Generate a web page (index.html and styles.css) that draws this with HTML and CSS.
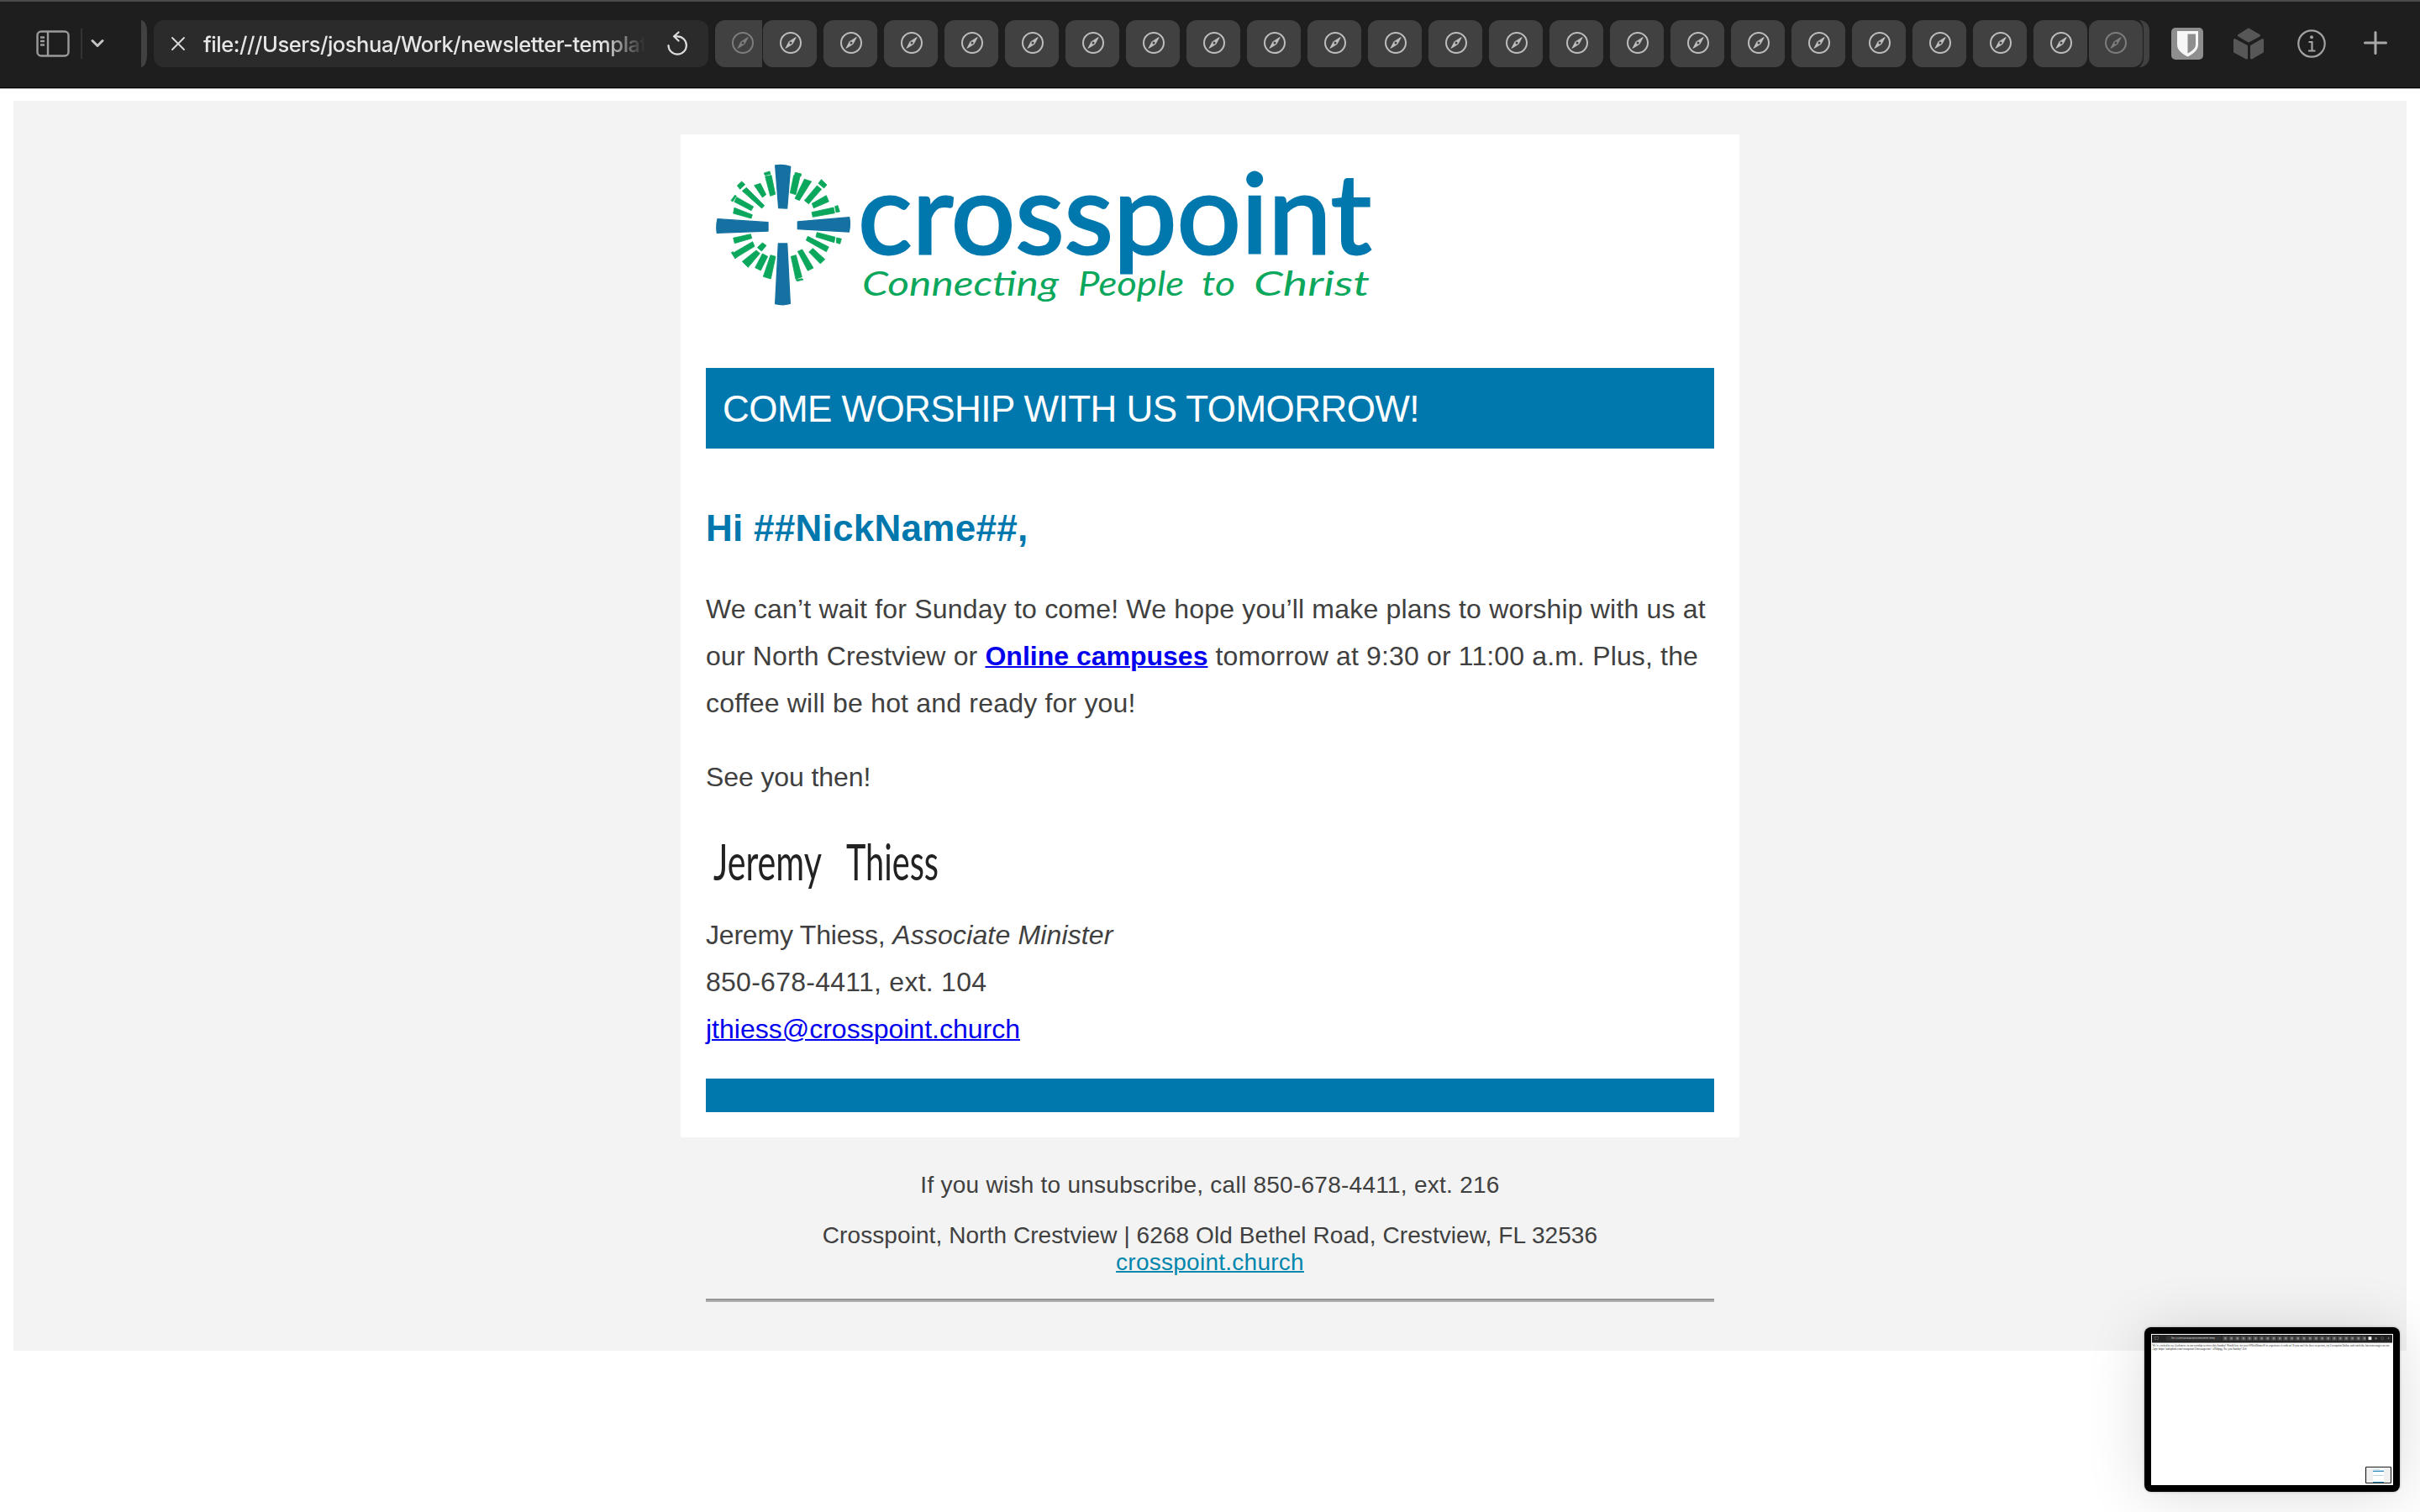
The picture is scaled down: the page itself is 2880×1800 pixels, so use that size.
FILE: index.html
```html
<!DOCTYPE html>
<html lang="en">
<head>
<meta charset="utf-8">
<title>Crosspoint newsletter</title>
<link rel="stylesheet" href="styles.css">
</head>
<body>
<svg class="defs" width="0" height="0" aria-hidden="true">
  <symbol id="compass" viewBox="0 0 26 26">
    <circle cx="13" cy="13" r="12" fill="none" stroke="currentColor" stroke-width="2"/>
    <path fill="currentColor" fill-rule="evenodd" d="M19.3 6.2q.5.3.2.9l-4.2 7.6-8 5.1q-.8.3-.7-.6l4-7.6 8-5.3q.4-.3.700-.1zM13 11.500a1.500 1.500 0 1 0 0 3 1.500 1.500 0 0 0 0-3z"/>
  </symbol>
</svg>
<header class="toolbar">
  <svg class="sidebar-icon" viewBox="0 0 40 32" width="40" height="32" fill="none" stroke="#9b9b9b" stroke-width="2.400">
    <rect x="1.500" y="1.500" width="37" height="29" rx="4.500"/><path d="M14 2v28M5 8.500h5M5 13h5M5 17.500h5"/>
  </svg>
  <span class="divider"></span>
  <svg class="chevron" viewBox="0 0 16 12" width="16" height="12" fill="none" stroke="#c4c4c4" stroke-width="3" stroke-linecap="round" stroke-linejoin="round"><path d="M2 2.500l6 6 6-6"/></svg>
  <span class="sliver left"></span>
  <div class="address">
    <svg viewBox="0 0 16 16" width="16" height="16" stroke="#dcdcdc" stroke-width="1.800" stroke-linecap="round"><path d="M1 1l14 14M15 1L1 15"/></svg>
    <span class="url">file:///Users/joshua/Work/newsletter-template</span>
    <svg class="reload" viewBox="0 0 24 30" width="24" height="30" fill="none" stroke="#dcdcdc" stroke-width="2.200" stroke-linecap="round" stroke-linejoin="round"><path d="M1.500 17a10.700 10.700 0 1 0 10.700-10.700h-3.500M13.500 1.500L8 6.300l5.500 5.200"/></svg>
  </div>
  <div class="tabs">
    <span class="tab dim first"><svg><use href="#compass"/></svg></span>
    <span class="tab"><svg><use href="#compass"/></svg></span><span class="tab"><svg><use href="#compass"/></svg></span><span class="tab"><svg><use href="#compass"/></svg></span><span class="tab"><svg><use href="#compass"/></svg></span><span class="tab"><svg><use href="#compass"/></svg></span><span class="tab"><svg><use href="#compass"/></svg></span><span class="tab"><svg><use href="#compass"/></svg></span><span class="tab"><svg><use href="#compass"/></svg></span><span class="tab"><svg><use href="#compass"/></svg></span><span class="tab"><svg><use href="#compass"/></svg></span><span class="tab"><svg><use href="#compass"/></svg></span>
    <span class="tab"><svg><use href="#compass"/></svg></span><span class="tab"><svg><use href="#compass"/></svg></span><span class="tab"><svg><use href="#compass"/></svg></span><span class="tab"><svg><use href="#compass"/></svg></span><span class="tab"><svg><use href="#compass"/></svg></span><span class="tab"><svg><use href="#compass"/></svg></span><span class="tab"><svg><use href="#compass"/></svg></span><span class="tab"><svg><use href="#compass"/></svg></span><span class="tab"><svg><use href="#compass"/></svg></span><span class="tab"><svg><use href="#compass"/></svg></span><span class="tab"><svg><use href="#compass"/></svg></span>
    <span class="tab dim last"><svg><use href="#compass"/></svg></span>
  </div>
  <svg class="stack-end" viewBox="0 0 12 56" width="12" height="56"><path d="M0 0a12 12 0 0 1 12 12v32a12 12 0 0 1-12 12c3-3 5-6 5-12V12C5 6 3 3 0 0z" fill="#414141"/></svg>
  <svg class="shield" viewBox="0 0 38 38" width="38" height="38"><rect width="38" height="38" rx="5" fill="#8e8e8e"/><path d="M7 4h25v16c0 7-6 11-12.500 14.500C13 31 7 27 7 20z" fill="#f7f7f7"/><path d="M19.500 7.500H29V20c0 4.500-4.500 8-9.500 10.500z" fill="#8e8e8e"/></svg>
  <svg class="cube" viewBox="0 0 36 38" width="36" height="38" fill="#575757" stroke="#575757" stroke-width="3" stroke-linejoin="round"><path d="M6.500 9.200L18 2l12.500 7.200L18 16zM1.500 14.500L15.500 22v14L1.500 28.500zM34.500 14.500v14L21.500 36V22z"/></svg>
  <svg class="info" viewBox="0 0 34 34" width="34" height="34" fill="none" stroke="#a2a2a2" stroke-width="2.200"><circle cx="17" cy="17" r="15.700"/><path d="M13.500 15h4v10.500M13 25.500h8.500"/><circle cx="17" cy="9.300" r="2" fill="#a2a2a2" stroke="none"/></svg>
  <svg class="plus" viewBox="0 0 28 28" width="28" height="28" stroke="#a8a8a8" stroke-width="3" stroke-linecap="round"><path d="M14 1.500v25M1.500 14h25"/></svg>
</header>

<main class="mail">
  <article class="card">
    <svg class="logo" viewBox="840 190 800 200" width="800" height="200" role="img">
      <g transform="translate(810 150) scale(.33333)">
        <g fill="#1571a1" stroke="#1571a1" stroke-width="4" stroke-linejoin="round">
          <path d="M338 141q27-5 54 4l-12 149-30-1zM349 420h31l11 214q-26 8-53 1zM132 332l180 12v31l-182 7q-4-25 2-50zM418 342l184-16q5 25-1 52l-183-10z"/>
        </g>
        <g fill="#0ba75c" stroke="#0ba75c" stroke-width="2.500">
          <path d="M302 180l22-4 14 68-18 6zM298 168l20-6 3 10-20 4zM263 212l22-7 20 40-13 10zM220 232l15-12 64 64-9 10zM202 213l16-15 12 11-18 17zM200 254l60 34-8 14-60-31zM180 266l14-19 5 3-13 20zM192 292l64 25-4 13-64-18zM404 176l22 5-15 64-20-6zM409 166l22 5-2 9-22-4zM442 190l25 8-43 68-16-7zM487 213l16 13-46 52-15-12zM502 191l20 19-10 12-20-17zM520 248l9 22-54 23-6-16zM468 308l78-17 4 20-78 14zM551 287l10-3 7 22-13 2z"/>
          <path d="M188 400l62-14 4 15-61 18zM190 452l67-39 7 17-64 39zM181 452l6-3 13 20-5 5zM220 484l50-40 13 11-42 50zM274 434l18-17 14 10-17 20zM292 456l19 10-25 50-20-10zM321 461l18 5-17 80-27-8zM394 466l18-5 21 78-22 8zM412 549l22-4 4 4-22 5zM418 448l16-7 40 66-20 10zM458 450l14-13 43 39-16 16zM454 394l75 38-9 17-72-41zM487 380l65 17-4 19-65-20zM557 399l17 4-5 18-13-4z"/>
        </g>
      </g>
      <text class="wordmark" x="1021" y="302" textLength="611" lengthAdjust="spacingAndGlyphs">crosspoint</text>
      <g class="tagline">
        <text x="1026" y="352" textLength="234" lengthAdjust="spacingAndGlyphs">Connecting</text>
        <text x="1283" y="352" textLength="126" lengthAdjust="spacingAndGlyphs">People</text>
        <text x="1430" y="352" textLength="40" lengthAdjust="spacingAndGlyphs">to</text>
        <text x="1492" y="352" textLength="138" lengthAdjust="spacingAndGlyphs">Christ</text>
      </g>
    </svg>
    <h1 class="banner">COME WORSHIP WITH US TOMORROW!</h1>
    <h2 class="greeting">Hi ##NickName##,</h2>
    <p><span class="looser">We can’t wait for Sunday to come! We hope you’ll make plans to worship with us at</span><br><span class="loose">our North Crestview or </span><a href="#"><b>Online campuses</b></a><span class="loose"> tomorrow at 9:30 or 11:00 a.m. Plus, the</span><br><span class="looser">coffee will be hot and ready for you!</span></p>
    <p class="tight">See you then!</p>
    <div class="signoff">
      <svg class="signature" viewBox="840 985 300 100" width="300" height="100">
        <text x="849" y="1048" textLength="129" lengthAdjust="spacingAndGlyphs">Jeremy</text>
        <text x="1007" y="1048" textLength="110" lengthAdjust="spacingAndGlyphs">Thiess</text>
      </svg>
      <div><span class="tighter">Jeremy Thiess, </span><i class="loose">Associate Minister</i></div>
      <div class="loosest">850-678-4411, ext. 104</div>
      <div><a href="#">jthiess@crosspoint.church</a></div>
    </div>
    <div class="bar"></div>
  </article>
  <footer class="footer">
    <p class="loosest">If you wish to unsubscribe, call 850-678-4411, ext. 216</p>
    <p><span class="address-line">Crosspoint, North Crestview | 6268 Old Bethel Road, Crestview, FL 32536</span><br><a class="loosest" href="#">crosspoint.church</a></p>
    <div class="rule"></div>
  </footer>
</main>

<aside class="preview">
  <svg viewBox="0 0 288 180" width="288" height="180">
    <rect width="288" height="180" fill="#fff"/>
    <rect x="1" y="1" width="286" height="9" fill="#222"/><rect x="1" y="10" width="286" height="1" fill="#888"/>
    <rect x="18" y="2.500" width="66" height="5.500" rx="1" fill="#303030"/>
    <rect x="4.500" y="3.500" width="4" height="3" fill="none" stroke="#777" stroke-width=".5"/>
    <text class="mini-url" x="24" y="6.400" textLength="52">file:///Users/joshua/Work/newsletter-templ</text>
    <path d="M85 5.300h171" stroke="#484848" stroke-width="5.600" stroke-dasharray="6.400 .8"/>
    <path d="M87.200 5.300h168" stroke="#8a8a8a" stroke-width="2.400" stroke-dasharray="2.400 4.800"/>
    <rect x="258.500" y="3.300" width="3.800" height="3.800" fill="#eee"/>
    <circle cx="267.500" cy="5.200" r="1.500" fill="#666"/><circle cx="275" cy="5.200" r="1.500" fill="none" stroke="#777" stroke-width=".5"/><path d="M281.500 5.200h2.400M282.700 4v2.400" stroke="#999" stroke-width=".5"/>
    <text class="mini" x="1.500" y="15" textLength="282">We’re excited to see God move in our worship services this Sunday! Would love for you ##NickName## to experience it with us! If you can’t be there in person, try Crosspoint Online and catch the latest messages on our</text>
    <text class="mini" x="1.500" y="18.700" textLength="112">App: https://subsplash.com/crosspoint-2/messages/mi/+z95dpqg. See you Sunday! Jeff</text>
    <rect x="255.500" y="158.500" width="30" height="19" rx=".8" fill="#f0f0f0" stroke="#222" stroke-width="1.200"/>
    <rect x="264" y="160" width="13" height="17" fill="#fff"/><path d="M264 163.300h13M264 176.500h13" stroke="#2587b5" stroke-width="1.200"/><path d="M264.500 161.200h8M264.500 168.500h12" stroke="#8dbdd4" stroke-width=".6"/>
  </svg>
</aside>
</body>
</html>
```
FILE: styles.css
```css
* { box-sizing: border-box; }
body { margin: 0; width: 2880px; height: 1800px; overflow: hidden; background: #fff; font-family: "Liberation Sans", Arial, sans-serif; color: #404040; }
.defs { display: block; }

.toolbar { display: flex; align-items: center; height: 106px; padding: 0 39px 4px 43px; background: #1e1e1e; border-top: 2px solid #4b4b4b; box-shadow: inset 0 -1px #b5b5b5, inset 0 -2px #000; }
.toolbar > * { flex: none; }
.divider { width: 2px; height: 36px; margin: 0 10px 0 13px; background: #333; }
.sliver { width: 7px; height: 56px; margin-left: 44px; background: #414141; border-radius: 0 7px 7px 0 / 0 14px 14px 0; }
.address { display: flex; align-items: center; width: 660px; height: 56px; margin-left: 8px; padding: 0 24px 0 21px; border-radius: 12px; background: #2b2b2b; }
.url { width: 528px; margin-left: 22px; padding-top: 2px; overflow: hidden; white-space: nowrap; font: 500 25.5px/36px Inter, sans-serif; letter-spacing: -.45px; color: #e6e6e6; mask-image: linear-gradient(90deg, #000 475px, transparent 526px); }
.reload { margin-left: 24px; }
.tabs { display: flex; gap: 8px; margin-left: 8px; }
.tab { display: flex; align-items: center; justify-content: center; width: 64px; height: 56px; border-radius: 12px; background: #414141; color: #bdbdbd; }
.tab svg { width: 26px; height: 26px; margin: -2px 0 0 2px; }
.dim { color: #7d7d7d; }
.first { width: 56px; margin-right: -7px; border-radius: 12px 0 0 12px; padding-left: 8px; }
.last { margin-left: -6px; }
.last svg { margin-left: 0; }
.stack-end { margin-left: -4px; }
.shield { margin-left: 26px; }
.cube { margin-left: 36px; }
.info { margin-left: 40px; }
.plus { margin: -2px 0 0 45px; }

.mail { margin: 14px 16px 0; height: 1488px; padding-top: 40px; background: #f3f3f3; }
.card { width: 1260px; height: 1194px; margin: 0 auto; padding: 30px; background: #fff; font-size: 32px; line-height: 56px; white-space: nowrap; }
.logo { display: block; overflow: visible; }
.wordmark { font: 400 131px Lato, sans-serif; fill: #0078ae; stroke: #0078ae; stroke-width: 2.800px; }
.tagline { font: italic 400 40px Lato, sans-serif; fill: #0ba75c; }
.banner { margin: 48px 0 0; height: 96px; padding-left: 20px; background: #0078ae; color: #fff; font-size: 44px; font-weight: 400; line-height: 97px; letter-spacing: -.56px; }
.greeting { margin: 67px 0 40px; color: #0078ae; font-size: 44px; line-height: 56px; letter-spacing: .27px; }
.card p { margin: 0 0 32px; }
.card a { color: #0000ee; text-decoration-thickness: 2px; }
.loose { letter-spacing: .15px; }
.looser { letter-spacing: .19px; }
.loosest { letter-spacing: .26px; }
.tight { letter-spacing: -.1px; }
.tighter { letter-spacing: -.2px; }
.address-line { letter-spacing: .08px; }
.signature { display: block; overflow: visible; font: 400 60px Lato, sans-serif; fill: #222; }
.bar { height: 40px; margin-top: 31px; background: #0078ae; }
.footer { width: 1200px; margin: 41px auto 0; text-align: center; font-size: 28px; line-height: 32px; white-space: nowrap; }
.footer p { margin: 0 0 28px; }
.footer p + p { margin-bottom: 27px; }
.footer a { color: #0086ad; text-decoration-thickness: 2px; }
.rule { height: 4px; border-top: 2px solid #959595; background: #aeb1b1; }

.preview { position: absolute; left: 2552px; top: 1580px; width: 304px; height: 196px; padding: 8px; border-radius: 8px; background: #000; box-shadow: 0 0 3px rgba(0,0,0,.3), 0 4px 70px rgba(0,0,0,.14); }
.preview svg { display: block; }
.mini { font: 3.200px "Liberation Serif", serif; fill: #222; }
.mini-url { font: 2.600px Inter, sans-serif; fill: #ddd; }
```
